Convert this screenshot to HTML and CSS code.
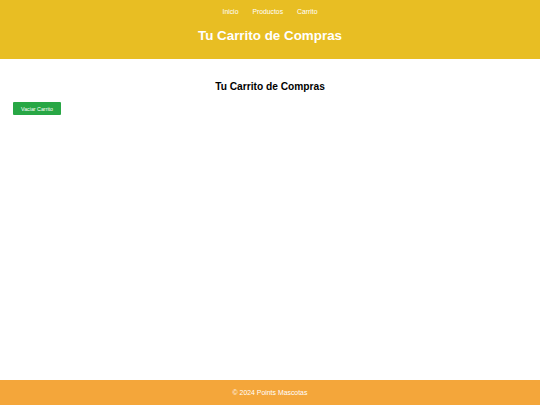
FILE: index.html
```html
<!DOCTYPE html>
<html lang="es">
<head>
<meta charset="utf-8">
<title>Carrito</title>
<link rel="stylesheet" href="styles.css">
</head>
<body>
<div class="page">
<header class="site-header">
  <nav class="nav">
    <a href="#">Inicio</a>
    <a href="#">Productos</a>
    <a href="#">Carrito</a>
  </nav>
  <h1 class="site-title">Tu Carrito de Compras</h1>
</header>
<main class="content">
  <h2 class="cart-title">Tu Carrito de Compras</h2>
  <div class="cart-items"></div>
  <button class="btn-clear">Vaciar Carrito</button>
</main>
<footer class="site-footer">© 2024 Points Mascotas</footer>
</div>
</body>
</html>
```
FILE: styles.css
```css
html, body { margin: 0; padding: 0; }
body { font-family: "Liberation Sans", Arial, sans-serif; background: #fff; }
.page { min-height: 405px; display: flex; flex-direction: column; }
.site-header {
  background: #e8be23;
  height: 59px;
  box-sizing: border-box;
  padding-top: 7px;
  text-align: center;
  color: #fff;
}
.nav { display: flex; justify-content: center; gap: 14px; font-size: 6.8px; line-height: 10px; }
.nav a { color: #fff; text-decoration: none; }
.site-title { margin: 11px 0 0; font-size: 13.4px; line-height: 16px; font-weight: bold; }
.content { flex: 1; padding: 0 13px; }
.cart-title { margin: 22px 0 0; text-align: center; font-size: 10.2px; line-height: 12px; font-weight: bold; color: #000; }
.btn-clear {
  margin-top: 9px;
  width: 48px; height: 13px;
  padding: 0;
  background: #28a745;
  color: #fff;
  border: none;
  border-radius: 1px;
  font-family: "Liberation Sans", Arial, sans-serif;
  font-size: 5.3px;
}
.site-footer {
  background: #f4a63a;
  height: 25px;
  line-height: 25px;
  text-align: center;
  color: #fff;
  font-size: 6.9px;
}
```
